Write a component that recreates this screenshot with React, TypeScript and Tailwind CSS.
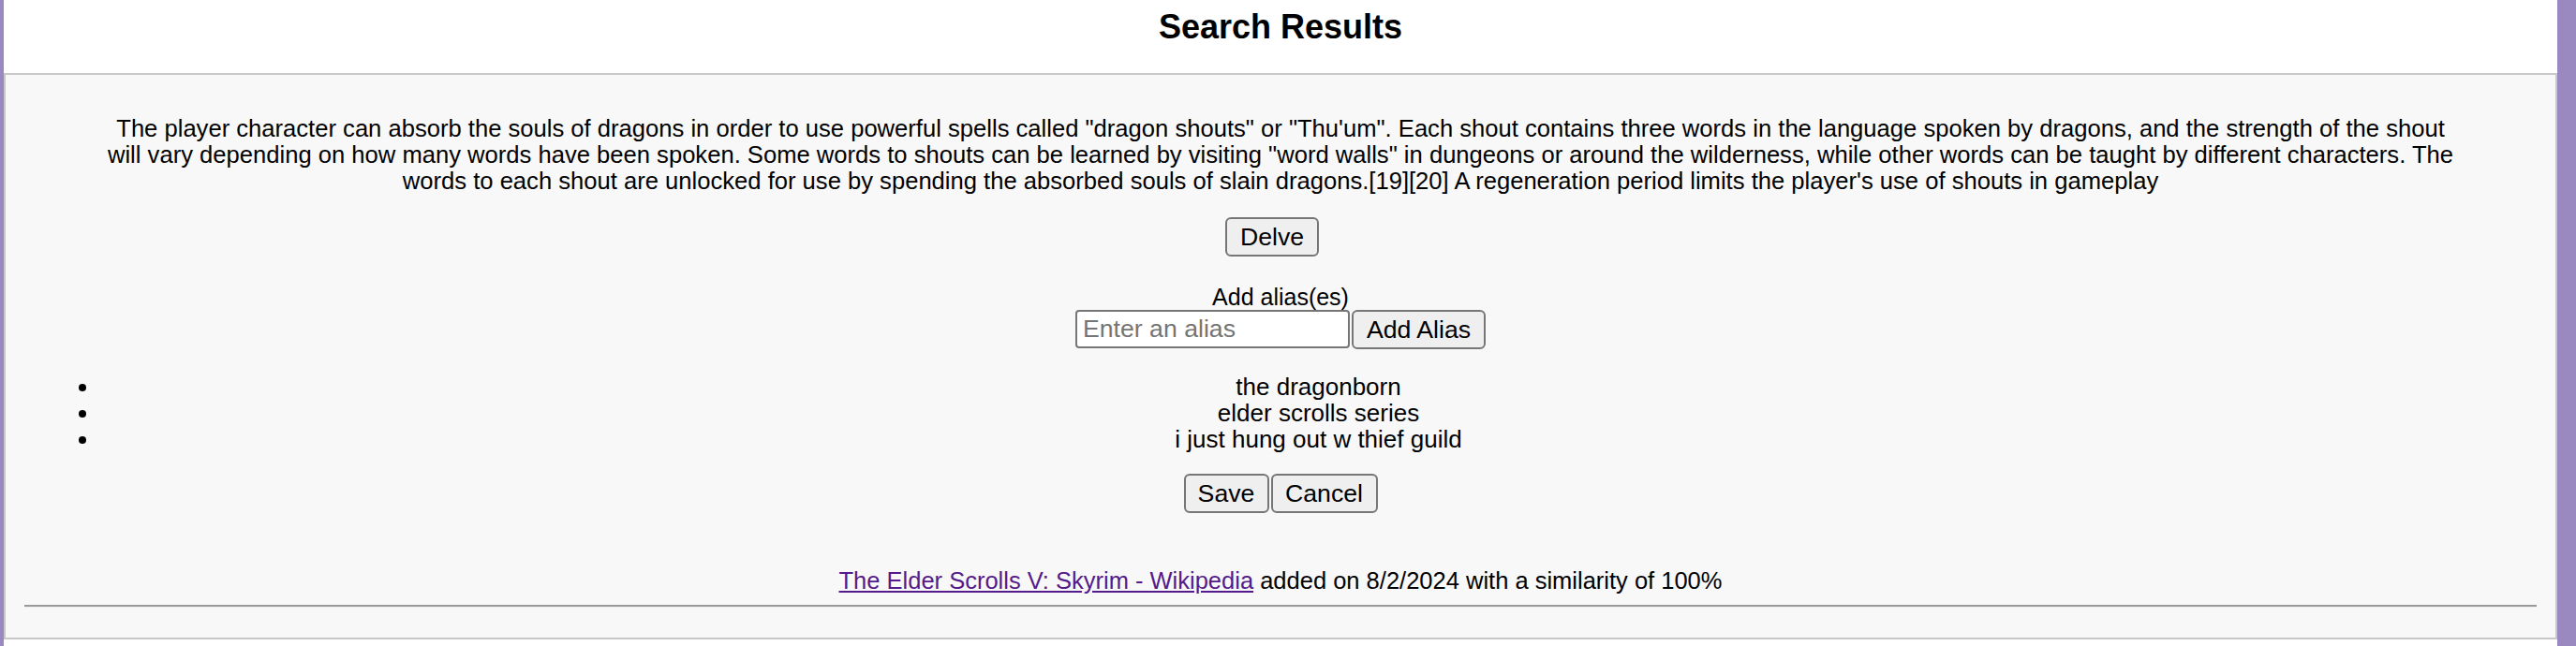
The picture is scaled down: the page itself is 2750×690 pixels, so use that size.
import React from "react";

const aliases = ["the dragonborn", "elder scrolls series", "i just hung out w thief guild"];

function Button({ children, className = "" }: { children: React.ReactNode; className?: string }) {
  return (
    <button
      className={`h-[42px] rounded-[6px] border-2 border-[#767676] bg-[#efefef] px-[12px] text-[26.67px] leading-[30px] text-black ${className}`}
    >
      {children}
    </button>
  );
}

export default function App() {
  return (
    <div
      className="flex h-[690px] w-full bg-[#9a88c0] pl-[4px] pr-[20px] text-black"
      style={{ fontFamily: '"Liberation Sans", Arial, sans-serif' }}
    >
      <main className="flex flex-1 flex-col bg-white">
        {/* Header */}
        <header className="h-[80px] border-b-2 border-[#c8c8c8] text-center">
          <h1 className="pt-[9px] text-[36px] font-bold leading-[40px]">Search Results</h1>
        </header>

        {/* Result card */}
        <section className="border-x-2 border-b-2 border-[#c8c8c8] bg-[#f8f8f8] px-[20px] pt-[43px] pb-[32px]">
          <p className="mx-auto w-[2508px] text-center text-[25.6px] leading-[28px]">
            The player character can absorb the souls of dragons in order to use powerful spells called "dragon
            shouts" or "Thu'um". Each shout contains three words in the language spoken by dragons, and the strength
            of the shout will vary depending on how many words have been spoken. Some words to shouts can be learned
            by visiting "word walls" in dungeons or around the wilderness, while other words can be taught by
            different characters. The words to each shout are unlocked for use by spending the absorbed souls of slain
            dragons.[19][20] A regeneration period limits the player's use of shouts in gameplay
          </p>

          <div className="mt-[25px] flex justify-center pr-[18px]">
            <Button className="w-[100px]">Delve</Button>
          </div>

          <div className="mt-[29px] flex flex-col items-center">
            <label className="text-[25px] leading-[28px]">Add alias(es)</label>
            <div className="flex gap-[2px]">
              <input
                placeholder="Enter an alias"
                className="h-[41px] w-[293px] rounded-[4px] border-2 border-[#767676] bg-white px-[6px] text-[26.67px] placeholder:text-[#757575]"
              />
              <Button className="h-[41px] w-[143px]">Add Alias</Button>
            </div>
          </div>

          <ul className="mt-[26px] list-disc pl-[81px]">
            {aliases.map((a) => (
              <li key={a} className="text-center text-[26px] leading-[28px]">
                {a}
              </li>
            ))}
          </ul>

          <div className="mt-[23px] flex justify-center gap-[2px]">
            <Button className="w-[91px]">Save</Button>
            <Button className="w-[114px]">Cancel</Button>
          </div>

          <div className="mt-[58px] text-center text-[25.5px] leading-[28px]">
            <a href="#" className="text-[#551a8b] underline">
              The Elder Scrolls V: Skyrim - Wikipedia
            </a>{" "}
            added on 8/2/2024 with a similarity of 100%
          </div>

          <hr className="mt-[12px] border-t-2 border-b border-t-[#9a9a9a] border-b-[#eeeeee]" />
        </section>
      </main>
    </div>
  );
}
